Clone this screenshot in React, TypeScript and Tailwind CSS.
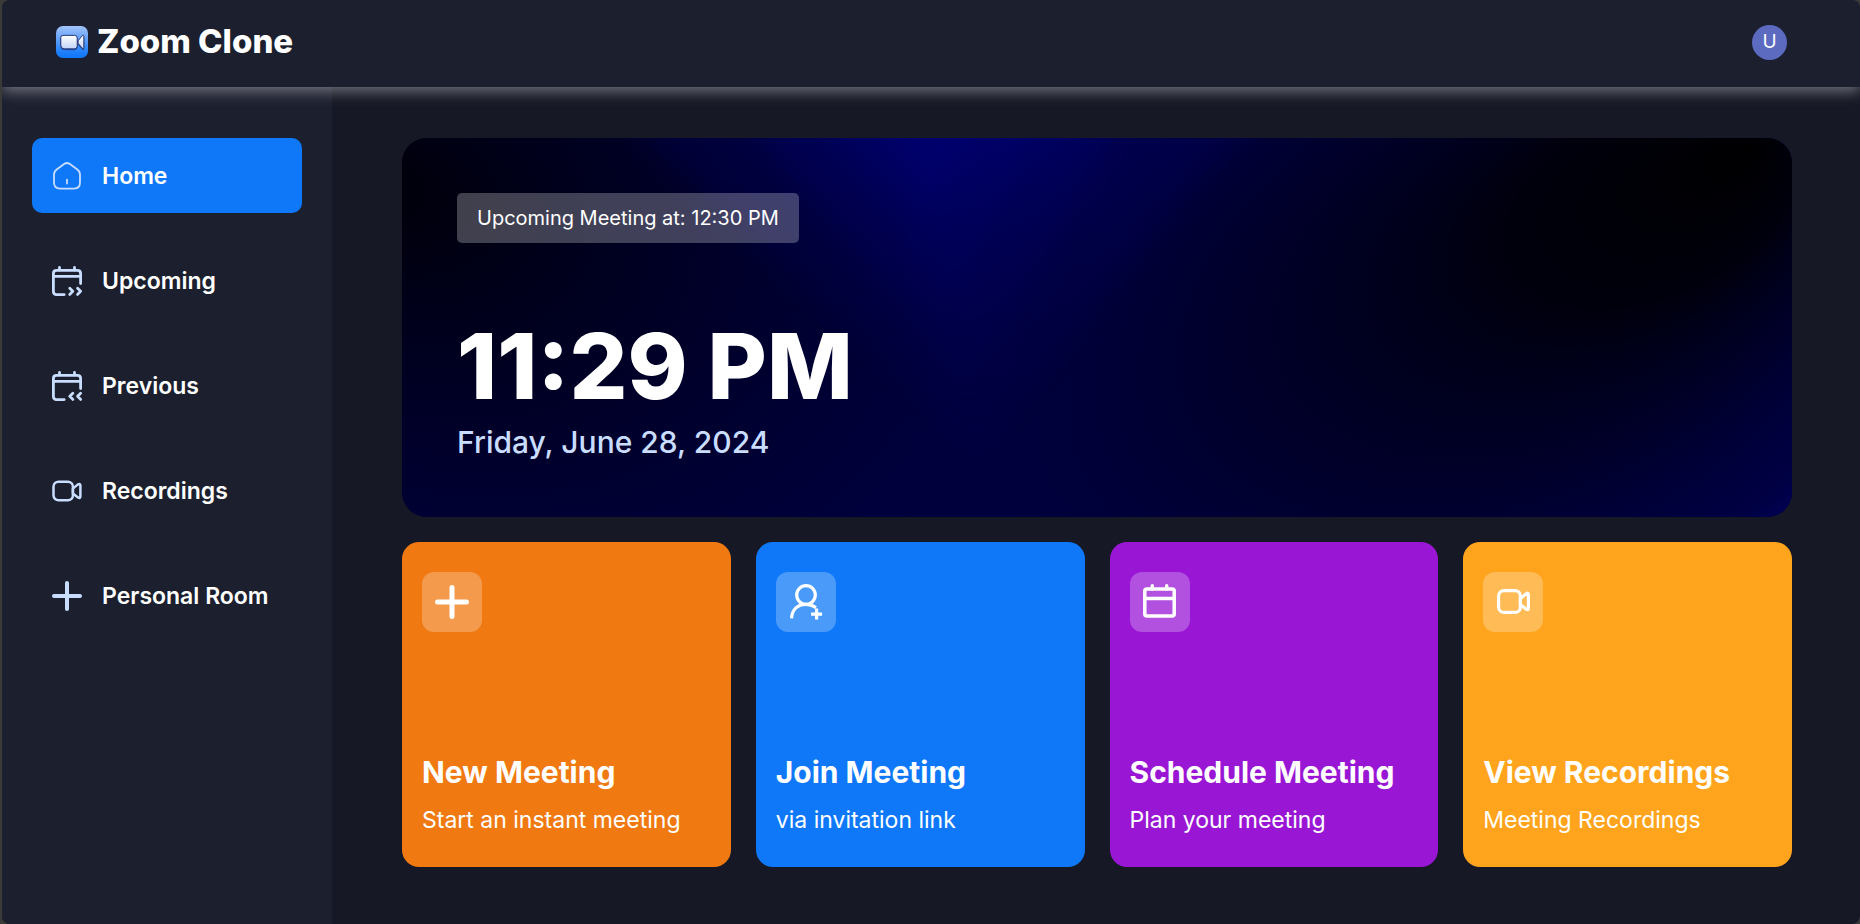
import React from "react";

type IconProps = { className?: string };

function LogoIcon({ className }: IconProps) {
  return (
    <svg viewBox="0 0 32 32" className={className} aria-hidden="true">
      <defs>
        <linearGradient id="logoBg" x1="0" y1="0" x2="0" y2="1">
          <stop offset="0" stopColor="#a3c3fb" />
          <stop offset="0.85" stopColor="#1a7cfa" />
          <stop offset="1" stopColor="#0e78f9" />
        </linearGradient>
        <linearGradient id="logoCam" x1="0" y1="0" x2="0" y2="1">
          <stop offset="0" stopColor="#ffffff" />
          <stop offset="1" stopColor="#c3d4f8" />
        </linearGradient>
        <filter id="logoShadow" x="-20%" y="-20%" width="140%" height="160%">
          <feDropShadow dx="0" dy="0.8" stdDeviation="0.5" floodColor="#0b2a78" floodOpacity="0.8" />
        </filter>
      </defs>
      <rect width="32" height="32" rx="7" fill="url(#logoBg)" />
      <g fill="url(#logoCam)" stroke="#22336f" strokeWidth="0.9" filter="url(#logoShadow)">
        <path d="M7 9.4H18.6Q21.2 9.4 21.2 12V20Q21.2 22.8 18.6 22.8H8.4Q4.8 22.8 4.8 19.2V11.6Q4.8 9.4 7 9.4Z" />
        <path d="M22.4 14.4 26.2 9.8Q27.8 8.4 27.8 10.4V21.6Q27.8 23.6 26.2 22.2L22.4 17.6Q21.6 16 22.4 14.4Z" />
      </g>
    </svg>
  );
}

function HomeIcon({ className }: IconProps) {
  return (
    <svg viewBox="0 0 30 30" className={className} fill="none" stroke="#C9DDFF" strokeWidth="1.8" strokeLinecap="round" strokeLinejoin="round" aria-hidden="true">
      <path d="M12.8 2.6Q15 1.4 17.2 2.6L25 8.2Q28 10.3 28 13.4V21.6Q28 27.6 22 27.6H8Q2 27.6 2 21.6V13.4Q2 10.3 5 8.2Z" />
      <path d="M15 18.6V22.6" />
    </svg>
  );
}

function CalendarIcon({ className, direction }: IconProps & { direction: "next" | "prev" }) {
  return (
    <svg viewBox="0 0 30 30" className={className} fill="none" stroke="#C9DDFF" strokeWidth="2.8" strokeLinecap="round" strokeLinejoin="round" aria-hidden="true">
      <path d="M12.2 28.6H4.6Q1.4 28.6 1.4 25.4V7.4Q1.4 4.4 4.6 4.4H25.4Q28.6 4.4 28.6 7.4V17.6" />
      <path d="M1.4 10.4H28.6M7.5 1.4V4M22.5 1.4V4" />
      {direction === "next" ? (
        <path d="M17.8 22.2 20.8 25.2 17.8 28.4M25.6 22.2 28.6 25.2 25.6 28.4" />
      ) : (
        <path d="M20.8 22.2 17.8 25.2 20.8 28.4M28.6 22.2 25.6 25.2 28.6 28.4" />
      )}
    </svg>
  );
}

function CameraIcon({ className }: IconProps) {
  return (
    <svg viewBox="0 0 30 30" className={className} fill="none" stroke="currentColor" strokeWidth="2.5" strokeLinecap="round" strokeLinejoin="round" aria-hidden="true">
      <rect x="1.5" y="5.7" width="19.4" height="18.6" rx="5" />
      <path d="M20.9 12.6 26 8.4Q28.4 7 28.4 9.6V20.2Q28.4 22.8 26 21.4L20.9 17.4Z" />
    </svg>
  );
}

function PlusIcon({ className }: IconProps) {
  return (
    <svg viewBox="0 0 30 30" className={className} fill="none" stroke="currentColor" strokeWidth="4" strokeLinecap="round" aria-hidden="true">
      <path d="M15 2V28M2 15H28" />
    </svg>
  );
}

function AddPlusIcon({ className }: IconProps) {
  return (
    <svg viewBox="0 0 36 36" className={className} fill="none" stroke="currentColor" strokeWidth="5" strokeLinecap="round" aria-hidden="true">
      <path d="M18 3.5V32.5M3.5 18H32.5" />
    </svg>
  );
}

function JoinIcon({ className }: IconProps) {
  return (
    <svg viewBox="0 0 36 36" className={className} fill="none" stroke="currentColor" strokeWidth="3.2" aria-hidden="true">
      <circle cx="18" cy="11" r="9.3" />
      <path d="M3.6 34.4C3.8 26 9.6 20.3 17.6 20.3C21.6 20.3 25 21.4 28 23.6" />
      <path d="M28.6 24.6V35.6M23.1 30.1H34.1" />
    </svg>
  );
}

function ScheduleIcon({ className }: IconProps) {
  return (
    <svg viewBox="0 0 36 36" className={className} fill="none" stroke="currentColor" strokeWidth="3.5" strokeLinecap="round" strokeLinejoin="round" aria-hidden="true">
      <rect x="2.8" y="5.1" width="29.4" height="27" rx="2" />
      <path d="M3 14.6H32M10.3 1.8V5M24.7 1.8V5" />
    </svg>
  );
}

function ViewIcon({ className }: IconProps) {
  return (
    <svg viewBox="0 0 36 36" className={className} fill="none" stroke="currentColor" strokeWidth="3.2" strokeLinecap="round" strokeLinejoin="round" aria-hidden="true">
      <rect x="3.6" y="6.6" width="21.8" height="21.8" rx="5.5" />
      <path d="M25.4 14.6 31.2 9.6Q33.4 8.4 33.4 10.8V24Q33.4 26.6 31.2 25.2L25.4 20.6Z" />
    </svg>
  );
}

function HeroBackdrop({ className }: IconProps) {
  return (
    <svg viewBox="0 0 1390 379" preserveAspectRatio="none" className={className} aria-hidden="true">
      <defs>
        <radialGradient id="leftDark" gradientUnits="userSpaceOnUse" cx="0" cy="0" r="1" gradientTransform="translate(-20 50) rotate(20) scale(600 400)">
          <stop offset="0" stopColor="#000009" />
          <stop offset="0.3" stopColor="#00001b" />
          <stop offset="0.65" stopColor="#00002d" />
          <stop offset="1" stopColor="#00003c" />
        </radialGradient>
        <radialGradient id="blob" gradientUnits="userSpaceOnUse" cx="0" cy="0" r="1" fx="0.71" fy="-0.107" gradientTransform="translate(910 250) rotate(-23.4) scale(700 426)">
          <stop offset="0" stopColor="#000001" />
          <stop offset="0.22" stopColor="#00000d" />
          <stop offset="0.3" stopColor="#000019" />
          <stop offset="0.4" stopColor="#000024" />
          <stop offset="0.5" stopColor="#00002e" />
          <stop offset="0.62" stopColor="#00003a" />
          <stop offset="0.78" stopColor="#000044" />
          <stop offset="0.9" stopColor="#00005c" />
          <stop offset="1" stopColor="#000066" />
        </radialGradient>
        <linearGradient id="blobFade" gradientUnits="userSpaceOnUse" x1="500" y1="0" x2="660" y2="0">
          <stop offset="0" stopColor="#000" />
          <stop offset="1" stopColor="#fff" />
        </linearGradient>
        <mask id="blobMask">
          <rect width="1390" height="379" fill="url(#blobFade)" />
        </mask>
        <linearGradient id="beam" gradientUnits="userSpaceOnUse" x1="0" y1="0" x2="0" y2="260">
          <stop offset="0" stopColor="#000074" />
          <stop offset="1" stopColor="#00004c" />
        </linearGradient>
        <filter id="soft" x="-30%" y="-30%" width="160%" height="160%">
          <feGaussianBlur stdDeviation="14" />
        </filter>
      </defs>
      <rect width="1390" height="379" fill="url(#leftDark)" />
      <rect width="1390" height="379" fill="url(#blob)" mask="url(#blobMask)" />
      <g fill="url(#beam)" filter="url(#soft)">
        <path d="M180 -60H880L575 310Z" opacity="0.22" />
        <path d="M310 -60H740L565 250Z" opacity="0.32" />
        <path d="M390 -60H660L548 170Z" opacity="0.35" />
        <path d="M450 -60H600L530 80Z" opacity="0.6" />
      </g>
    </svg>
  );
}

const navItems = [
  { label: "Home", icon: <HomeIcon className="size-[30px]" />, active: true },
  { label: "Upcoming", icon: <CalendarIcon direction="next" className="size-[30px]" />, active: false },
  { label: "Previous", icon: <CalendarIcon direction="prev" className="size-[30px]" />, active: false },
  { label: "Recordings", icon: <CameraIcon className="size-[30px]" />, active: false },
  { label: "Personal Room", icon: <PlusIcon className="size-[30px]" />, active: false },
];

const actions = [
  { title: "New Meeting", text: "Start an instant meeting", color: "bg-[#F07911]", icon: <AddPlusIcon className="size-9" /> },
  { title: "Join Meeting", text: "via invitation link", color: "bg-[#0E78F9]", icon: <JoinIcon className="size-9" /> },
  { title: "Schedule Meeting", text: "Plan your meeting", color: "bg-[#9917D4]", icon: <ScheduleIcon className="size-9" /> },
  { title: "View Recordings", text: "Meeting Recordings", color: "bg-[#FFA41C]", icon: <ViewIcon className="size-9" /> },
];

export default function App() {
  return (
    <div className="min-h-screen bg-[#3a3a38] pl-0.5 font-['Inter',sans-serif] text-white">
      <div className="flex min-h-screen flex-col overflow-hidden rounded-lg bg-[#161925]">
        <header className="z-10 flex h-[87px] items-center justify-between bg-[#1C1F2E] pr-[73px] pb-[3px] pl-[54px] shadow-[0_4px_14px_rgba(255,255,255,0.4)]">
          <a href="#home" className="flex items-center gap-[9px]">
            <LogoIcon className="size-8" />
            <span className="pb-0.5 text-[33px] leading-10 font-extrabold">Zoom Clone</span>
          </a>
          <button type="button" aria-label="Account" className="flex size-[35px] items-center justify-center rounded-full bg-[#5C6BC0] text-[19px] font-normal">
            U
          </button>
        </header>
        <div className="flex flex-1">
          <nav className="w-[330px] shrink-0 bg-[#1C1F2E] px-[30px] pt-[51px]">
            <ul className="flex flex-col gap-[30px]">
              {navItems.map((item) => (
                <li key={item.label}>
                  <a
                    href="#"
                    aria-current={item.active ? "page" : undefined}
                    className={`flex h-[75px] items-center gap-5 rounded-[10px] px-5 text-[23px] font-semibold ${item.active ? "bg-[#0E78F9]" : ""}`}
                  >
                    <span className="text-[#C9DDFF]">{item.icon}</span>
                    <span className="pt-0.5">{item.label}</span>
                  </a>
                </li>
              ))}
            </ul>
          </nav>
          <main className="flex min-w-0 flex-1 flex-col gap-[25px] pt-[51px] pr-[68px] pb-14 pl-[70px]">
            <section className="relative h-[379px] overflow-hidden rounded-[25px] bg-[#00002c]">
              <HeroBackdrop className="absolute inset-0 size-full" />
              <div className="relative flex h-full flex-col items-start justify-between px-[55px] pt-[55px] pb-[57px]">
                <h2 className="rounded-[5px] bg-white/25 px-5 py-2.5 text-xl leading-[30px]">Upcoming Meeting at: 12:30 PM</h2>
                <div className="flex flex-col gap-[13px]">
                  <h1 className="text-[91px] leading-[90px] font-extrabold">11:29 PM</h1>
                  <p className="text-[30px] leading-9 font-medium text-[#C9DDFF]">Friday, June 28, 2024</p>
                </div>
              </div>
            </section>
            <section className="grid grid-cols-4 gap-[25px]">
              {actions.map((action) => (
                <button
                  key={action.title}
                  type="button"
                  className={`flex h-[325px] flex-col items-start justify-between rounded-[17px] px-5 pt-[30px] pb-[29px] text-left ${action.color}`}
                >
                  <span className="flex size-[60px] items-center justify-center rounded-xl bg-white/25">{action.icon}</span>
                  <span className="flex flex-col gap-[11px]">
                    <span className="text-[30px] leading-10 font-bold">{action.title}</span>
                    <span className="text-[23px] leading-[35px]">{action.text}</span>
                  </span>
                </button>
              ))}
            </section>
          </main>
        </div>
      </div>
    </div>
  );
}
